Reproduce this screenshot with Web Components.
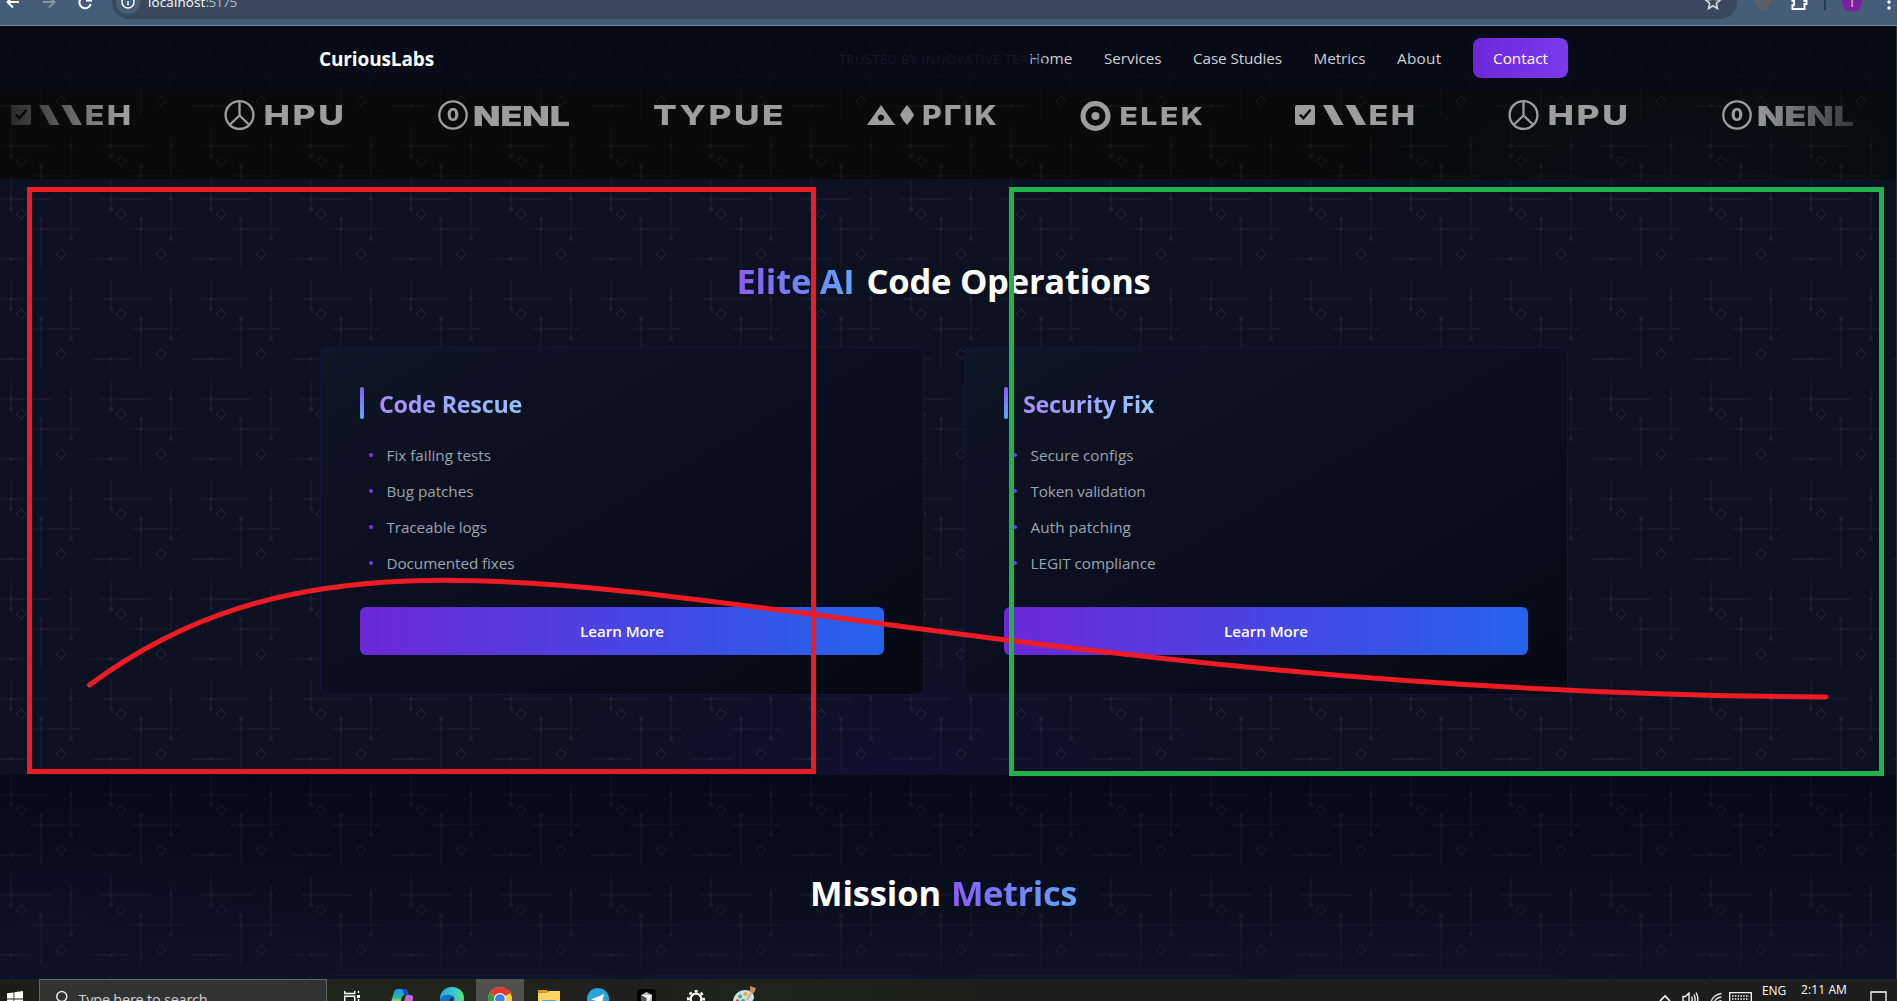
<!DOCTYPE html>
<html lang="en">
<head>
<meta charset="utf-8">
<title>CuriousLabs</title>
<style>
html,body{margin:0;height:100%;background:#0c1122;overflow:hidden}
body{font-family:"Open Sans","Noto Sans",sans-serif;font-size:15.3px;color:#fff}
</style>
</head>
<body>
<desktop-view></desktop-view>
<script>
const tile = (k) => {
  const s = `<svg xmlns="http://www.w3.org/2000/svg" width="100" height="100"><g fill="#fff" fill-opacity="${.028*k}"><path d="M10 0h2v30h-2zM1 19h50v2H1zM70 10h2v50h-2zM40 40h2v50h-2zM31 49h50v2H31zM0 79h31v2H0zM91 79h9v2h-9z"/></g><g fill="#fff" fill-opacity="${.042*k}"><path d="M9 28h4v4H9zM69 58h4v4h-4zM39 38h4v4h-4z"/><circle cx="11" cy="20" r="2"/><circle cx="71" cy="20" r="2"/><circle cx="41" cy="50" r="2"/><circle cx="11" cy="80" r="2"/></g><path d="M21 30l5 5-5 5-5-5zM61 70l5 5-5 5-5-5z" fill="none" stroke="#fff" stroke-opacity="${.085*k}"/></svg>`;
  return `url('data:image/svg+xml,${encodeURIComponent(s)}')`;
};
const define = (name, html) => customElements.define(name, class extends HTMLElement {
  constructor() {
    super();
    this.attachShadow({ mode: 'open' }).innerHTML = html;
  }
});

define('desktop-view', `
<style>
:host{display:flex;flex-direction:column;height:1001px;width:1897px;position:relative;overflow:hidden}
main{flex:1;min-height:0;overflow:hidden;display:flex;flex-direction:column;box-sizing:border-box;border-right:1px solid #2b2e35}
</style>
<browser-bar></browser-bar>
<main>
  <site-header></site-header>
  <logo-strip></logo-strip>
  <services-section></services-section>
  <metrics-section></metrics-section>
</main>
<task-bar></task-bar>
<pen-marks></pen-marks>`);

define('browser-bar', `
<style>
:host{display:flex;align-items:flex-end;height:25px;flex:none;overflow:hidden;background:#455d78;border-bottom:1px solid #74859a}
.row{display:flex;align-items:center;height:46px;width:1897px;flex:none}
svg{display:block;flex:none}
.pill{display:flex;align-items:center;margin-left:13px;width:1625px;height:34px;border-radius:17px;background:#3a485c;box-sizing:border-box;padding:0 15px 0 4px;font-size:13.4px;flex:none}
.info{width:24px;height:24px;border-radius:50%;background:#455d78;display:grid;place-items:center;margin-right:8px}
.dim{color:#b6bec9}
.sp{flex:1}
.sep{width:2px;height:16px;background:#2d3b4f;margin-left:16px}
.av{width:20px;height:20px;border-radius:50%;background:#7b1fa2;display:grid;place-items:center;font-size:12px;margin:0 24px 0 16px;color:#e7d2ee}
</style>
<div class="row">
 <svg width="99" height="20" viewBox="0 0 99 20" fill="none" stroke="#fff" stroke-width="2"><path d="M19 10H8M13 4.500l-5.500 5.500 5.500 5.500"/><path d="M43 10h11M49 4.500l5.500 5.500-5.500 5.500" stroke="#8798ab"/><path d="M90.500 8a5.800 5.800 0 1 0 .3 4M91 3.500V8.500H86"/></svg>
 <div class="pill">
  <div class="info"><svg width="14" height="14" viewBox="0 0 14 14" fill="none" stroke="#fff" stroke-width="1.500"><circle cx="7" cy="7" r="6"/><path d="M7 6.300v4M7 3.500v1.500"/></svg></div>
  <fit-text w="57.5">localhost</fit-text><fit-text class="dim" w="31">:5175</fit-text>
  <div class="sp"></div>
  <svg width="18" height="18" viewBox="0 0 18 18" fill="none" stroke="#d3d9e0" stroke-width="1.600"><path d="M9 1.800l2.100 4.700 5.100.5-3.900 3.400 1.200 5.100L9 12.800l-4.500 2.700 1.200-5.100L1.800 7l5.100-.5z"/></svg>
 </div>
 <svg style="margin-left:17px" width="18" height="20" viewBox="0 0 18 20"><path d="M4 2h10l3 7-4 9H5L1 9z" fill="#615f5f"/><path d="M5 11h3M10 11h3M6 14h6" stroke="#455d78" stroke-width="1.500"/></svg>
 <svg style="margin-left:18px" width="18" height="18" viewBox="0 0 18 18" fill="none" stroke="#fff" stroke-width="2"><path d="M2.500 4h4V2h4v2h4v4h2v3h-2v5h-12v-4h1.500V8H2.500z"/></svg>
 <div class="sep"></div>
 <div class="av">T</div>
 <svg width="6" height="18" viewBox="0 0 6 18" fill="#fff"><circle cx="3" cy="3" r="1.700"/><circle cx="3" cy="9" r="1.700"/><circle cx="3" cy="15" r="1.700"/></svg>
</div>`);

define('site-header', `
<style>
:host{display:flex;height:64px;flex:none;background:${tile(.2)} 0 0,#070a17;align-items:center;padding:0 328px 0 319px;position:relative}
.brand{font-weight:700;font-size:19px;margin-top:2px}
nav{margin-left:auto;display:flex;align-items:center;gap:31.500px;color:#ced1d8}
.cta{background:linear-gradient(90deg,#6d28d9,#7c3aed);border-radius:8px;width:95px;height:40px;display:flex;align-items:center;justify-content:center;color:#fff}
.ghost{position:absolute;left:839px;top:24px;line-height:20px;font-size:12.500px;color:#151924}
</style>
<fit-text class="ghost" w="209">TRUSTED BY INNOVATIVE TEAMS</fit-text>
<fit-text class="brand" w="115">CuriousLabs</fit-text>
<nav>
 <fit-text w="43.5">Home</fit-text><fit-text w="57.5">Services</fit-text><fit-text w="89">Case Studies</fit-text><fit-text w="52">Metrics</fit-text><fit-text w="44.500">About</fit-text>
 <div class="cta"><fit-text w="55">Contact</fit-text></div>
</nav>`);

const LOGOS = {
  weh: `<path fill-rule="evenodd" d="M2 105h16a2 2 0 0 1 2 2v16a2 2 0 0 1-2 2H2a2 2 0 0 1-2-2v-16a2 2 0 0 1 2-2zM4 115.500l4.500 4.500 8-9.500-2-1.600-6.200 7.300-2.500-2.500z"/><path d="M28 105h9.500l11 20H39zM50.500 105H60l11 20h-9.500z"/><text x="73.500" y="125" textLength="49">EH</text>`,
  hpu: `<g fill="none" stroke="#9d9d9d" stroke-width="2.300"><circle cx="14.500" cy="115" r="13.900"/><path d="M14.500 101v14.500M14.500 115.500L4.500 125M14.500 115.500l10 9.500"/></g><text x="38.500" y="125" textLength="83">HPU</text>`,
  nenl: `<circle cx="14" cy="115" r="13.700" fill="none" stroke="#9d9d9d" stroke-width="2.300"/><text x="8" y="121.300" style="font-size:17.500px;letter-spacing:0" textLength="12">0</text><text x="34" y="126" style="font-weight:900;letter-spacing:0" textLength="97">NENL</text>`,
  typue: `<text x="0" y="125" textLength="133">TYPUE</text>`,
  aptik: `<path fill-rule="evenodd" d="M14 105l14 20H0zM14 114.500a3.200 3.200 0 1 0 .01 0zM40 105q4.500 5 7 10-2.500 5-7 10-4.500-5-7-10 2.500-5 7-10z"/><text x="55" y="125" textLength="77">PΓIK</text>`,
  elek: `<circle cx="14.500" cy="116" r="12.500" fill="none" stroke="#9d9d9d" stroke-width="5"/><circle cx="14.500" cy="116" r="4"/><text x="38.500" y="125" style="font-size:24.500px" textLength="86">ELEK</text>`
};
customElements.define('brand-logo', class extends HTMLElement {
  constructor() {
    super();
    this.attachShadow({ mode: 'open' }).innerHTML = `<style>:host{display:block;flex:none;width:214px}svg{display:block;overflow:visible}text{font:800 27.500px Inter,sans-serif;letter-spacing:2px}</style>
<svg width="214" height="40" viewBox="0 95 214 40" fill="#9d9d9d">${LOGOS[this.getAttribute('name')]}</svg>`;
    this.shadowRoot.querySelectorAll('text').forEach(t => t.setAttribute('lengthAdjust', 'spacingAndGlyphs'));
  }
});

define('logo-strip', `
<style>
:host{display:block;height:89px;flex:none;background:${tile(.75)} 0 -64px,radial-gradient(ellipse 330px 120px at 1680px 70px,#0b0e15,transparent),#0a0a0b}
.track{display:flex;padding:5px 0 0 11px;overflow:hidden;-webkit-mask-image:linear-gradient(90deg,transparent -20px,#000 125px,#000 1755px,transparent 1895px);mask-image:linear-gradient(90deg,transparent -20px,#000 125px,#000 1755px,transparent 1895px)}
</style>
<div class="track">${['weh','hpu','nenl','typue','aptik','elek','weh','hpu','nenl'].map(n => `<brand-logo name="${n}"></brand-logo>`).join('')}</div>`);

define('service-card', `
<style>
:host{display:flex;flex-direction:column;box-sizing:border-box;width:604px;height:348px;border:1px solid #17123a;border-radius:8px;padding:39px;background:linear-gradient(150deg,#0d1726 0,#0c1122 24%,#080e1c 62%,#040914 100%)}
.h{display:flex;align-items:center;height:32px;gap:15px;font-size:23.300px;font-weight:700}
.h:before{content:"";width:4px;height:32px;border-radius:2px;background:linear-gradient(#8b5cf6,#60a5fa)}
.h slot{display:block;margin-top:2px}
ul{list-style:none;margin:24px 0 0;padding:0;display:flex;flex-direction:column;gap:12px}
.btn{margin-top:32px;height:48px;border-radius:6px;background:linear-gradient(90deg,#6d28d9,#2563eb);display:flex;align-items:center;justify-content:center;font-weight:600;font-size:15.200px}
</style>
<div class="h"><slot name="title"></slot></div>
<ul><slot></slot></ul>
<div class="btn"><fit-text w="84">Learn More</fit-text></div>`);

define('card-item', `
<style>
:host{display:flex;align-items:center;height:24px;color:#9ca3af;padding-left:9px;gap:13.500px}
i{width:4px;height:4px;border-radius:50%;background:#7c3aed}
</style><i></i><slot></slot>`);

define('services-section', `
<style>
:host{display:flex;flex-direction:column;align-items:center;box-sizing:border-box;height:596px;flex:none;padding:82px 8px 0 0;background:${tile(1)},radial-gradient(ellipse 330px 150px at 890px 596px,#110f2e,transparent),#0c1122}
.title{display:flex;height:40px;line-height:40px;font-size:34.500px;font-weight:700;gap:12px;margin-left:-1px}
.g{background:linear-gradient(90deg,#8b5cf6,#60a5fa);-webkit-background-clip:text;background-clip:text;color:transparent}
.cards{display:flex;gap:40px;margin-top:46px}
.t{background:linear-gradient(90deg,#a78bfa,#93c5fd);-webkit-background-clip:text;background-clip:text;color:transparent}
</style>
<div class="title"><fit-text class="g" w="118">Elite AI</fit-text><fit-text w="284">Code Operations</fit-text></div>
<div class="cards">
 <service-card><fit-text slot="title" class="t" w="143">Code Rescue</fit-text>
  <card-item><fit-text w="104.500">Fix failing tests</fit-text></card-item>
  <card-item><fit-text w="87">Bug patches</fit-text></card-item>
  <card-item><fit-text w="100.500">Traceable logs</fit-text></card-item>
  <card-item><fit-text w="128">Documented fixes</fit-text></card-item></service-card>
 <service-card><fit-text slot="title" class="t" w="131">Security Fix</fit-text>
  <card-item><fit-text w="103">Secure configs</fit-text></card-item>
  <card-item><fit-text w="115">Token validation</fit-text></card-item>
  <card-item><fit-text w="100.500">Auth patching</fit-text></card-item>
  <card-item><fit-text w="125">LEGIT compliance</fit-text></card-item></service-card>
</div>`);

define('metrics-section', `
<style>
:host{display:flex;flex-direction:column;align-items:center;box-sizing:border-box;height:204px;flex:none;overflow:hidden;padding:98px 8px 0 0;background:${tile(.85)},radial-gradient(ellipse 300px 130px at 60px 150px,rgba(22,14,42,.25),transparent),linear-gradient(#040a16,#0c1124)}
.title{display:flex;flex:none;height:40px;line-height:40px;font-size:34.500px;font-weight:700;gap:10px;margin-left:-1px}
.g{background:linear-gradient(90deg,#8b5cf6,#60a5fa);-webkit-background-clip:text;background-clip:text;color:transparent}
.row{display:flex;gap:32px;margin-top:62px}
.row i{box-sizing:border-box;width:288px;height:100px;border:1px solid #17123a;border-radius:12px;background:#0d1428}
</style>
<div class="title"><fit-text w="131">Mission</fit-text><fit-text class="g" w="126">Metrics</fit-text></div>
<div class="row"><i></i><i></i><i></i><i></i></div>`);

define('task-bar', `
<style>
:host{display:block;height:22px;flex:none;overflow:hidden;background:linear-gradient(90deg,#1c1c1b 0,#22251b 340px,#22241b 480px,#1f1f1e 620px,#20231b 770px,#1d1d1d 1000px)}
.row{display:flex;align-items:center;height:40px}
svg{display:block;flex:none}
.win{width:39px;display:flex;justify-content:center;padding-right:9px;box-sizing:border-box;flex:none}
.search{width:288px;height:40px;box-sizing:border-box;border:1px solid #646464;background:#323232;display:flex;align-items:center;color:#d2d2d2;font-size:14.500px;padding-left:15px;gap:10.500px;flex:none}
.s{width:49px;height:40px;display:flex;align-items:center;justify-content:center;flex:none}
.on{background:#50504e}
.tray{margin-left:auto;display:flex;align-items:center;font-size:12px}
</style>
<div class="row">
 <div class="win"><svg width="16" height="16" viewBox="0 0 16 16" fill="#fff"><path d="M0 2.300L6.500 1.400v6.200H0zM7.300 1.200L16 0v7.600H7.300zM0 8.400h6.500v6.200L0 13.700zM7.300 8.400H16V16l-8.700-1.200z"/></svg></div>
 <div class="search"><svg width="13" height="18" viewBox="0 0 13 18" fill="none" stroke="#e8e8e8" stroke-width="1.500"><circle cx="6.800" cy="6.500" r="5"/><path d="M4 11l-3.500 5"/></svg><fit-text w="129">Type here to search</fit-text></div>
 <div class="s"><svg width="18" height="18" viewBox="0 0 18 18" fill="none" stroke="#fff" stroke-width="1.400"><path d="M1.700 1v2.500h10V1M1.700 17V6.300h10V17M15.500 1v2M15.500 9v8"/><path d="M14 5h3v3h-3z" fill="#fff" stroke="none"/></svg></div>
 <div class="s" style="width:52px"><svg width="24" height="22" viewBox="0 0 24 22"><defs><linearGradient id="a" x2="0" y2="1"><stop stop-color="#1494f2"/><stop offset=".5" stop-color="#27b9a0"/><stop offset=".8" stop-color="#e9dc32"/></linearGradient><linearGradient id="b" x2="0" y2="1"><stop stop-color="#b46bf0"/><stop offset=".7" stop-color="#f0569c"/></linearGradient></defs><path d="M7 1h8q2 0 2.500 2l1 4h-4q-2 0-3 3l-2 8H4q-4 0-3-4L4 4q1-3 3-3z" fill="url(#a)"/><path d="M11 1h4q2 0 2.500 2l1.300 4H14L13 3q-.5-2-2-2z" fill="#1b48b8"/><path d="M17 7h3q4 0 3 4l-2 8q-1 3-4 3h-5l3-12q.5-3 2-3z" fill="url(#b)"/></svg></div>
 <div class="s" style="width:48px"><svg width="24" height="24" viewBox="0 0 24 24"><defs><linearGradient id="e"><stop stop-color="#2aa7dd"/><stop offset=".6" stop-color="#38cbd0"/><stop offset="1" stop-color="#62e25c"/></linearGradient></defs><circle cx="12" cy="12" r="12" fill="#1273c4"/><path d="M0 12C0 5 5 0 12 0s12 5 12 11c0 4-3 6-7 6-3 0-4-1-3-3 2-5-3-7-7-6-4 0-6 2-7 4z" fill="url(#e)"/><path d="M9 13q1-3 4-3 1.500 1.500.5 4-.5 2 1 3-5 1-5.500-4z" fill="#17395e"/></svg></div>
 <div class="s on" style="width:48px"><svg width="24" height="24" viewBox="0 0 24 24"><circle cx="12" cy="12" r="12" fill="#ffcd40"/><path d="M12 12L1.600 6A12 12 0 0 1 22.400 6z" fill="#e33b2e"/><path d="M1.600 6A12 12 0 0 0 12 24l5-9z" fill="#2c9f4b"/><path d="M1.600 6h20.800H12z" fill="#e33b2e"/><circle cx="12" cy="12" r="6" fill="#fff"/><circle cx="12" cy="12" r="4.800" fill="#3f7ff0"/></svg></div>
 <div class="s"><svg width="22" height="18" viewBox="0 0 22 18"><path d="M0 0h9l1.500 2.500H0z" fill="#e0a010"/><path d="M0 2.500h9L11 1h11v17H0z" fill="#fbd362"/><path d="M4 11.500q0-1.500 1.500-1.500h11q1.500 0 1.500 1.500V18H4z" fill="#4aa8e0"/></svg></div>
 <div class="s"><svg width="22" height="22" viewBox="0 0 22 22"><circle cx="11" cy="11" r="11" fill="#2ba3dc"/><path d="M4 11.500L17 6l-2.500 11-4-3-2 2-.5-3.500z" fill="#fff"/></svg></div>
 <div class="s"><svg width="19" height="20" viewBox="0 0 19 20"><rect width="19" height="20" rx="4" fill="#000"/><path d="M4 6l5.500-3L15 6v7l-5.500 4L4 13z" fill="#bdbdbd"/><path d="M4 6h11l-5.500 11V9z" fill="#f4f4f4"/><path d="M4 6l5.500 3v8L4 13z" fill="#555"/></svg></div>
 <div class="s"><svg width="18" height="18" viewBox="0 0 18 18" fill="none" stroke="#fff"><circle cx="9" cy="9" r="5.300" stroke-width="2.200"/><circle cx="9" cy="9" r="7.700" stroke-width="2.600" stroke-dasharray="3 3.047" stroke-dashoffset="1.500"/></svg></div>
 <div class="s" style="width:50px"><svg width="26" height="26" viewBox="0 0 26 26"><path d="M1 16C1 9 7 4 13 4c5 0 9 3 9 7s-3 4-3 7-3 6-8 6S1 21 1 16z" fill="#c7e2ee"/><circle cx="8" cy="10.500" r="2" fill="#3fb35b"/><circle cx="13.500" cy="8" r="2" fill="#f3a33a"/><circle cx="5.500" cy="15" r="1.800" fill="#d8453b"/><circle cx="11" cy="15" r="2" fill="#3d8fe0"/><path d="M15 14L21 4" stroke="#d9aa6a" stroke-width="2"/><path d="M18 0l6 2-2 5-4-2z" fill="#c08b5e"/></svg></div>
 <div class="tray">
  <svg width="12" height="10" viewBox="0 0 12 10" fill="none" stroke="#fff" stroke-width="1.600"><path d="M1 7l5-5 5 5"/></svg>
  <svg style="margin-left:11px" width="17" height="16" viewBox="0 0 17 16" fill="none" stroke="#fff" stroke-width="1.300"><path d="M1 5.500h2.500L7 2v12l-3.500-3.500H1zM9.500 5.500q1.500 2.500 0 5M11.800 3.500q2.700 4.500 0 9M14 1.500q3.700 6.500 0 13"/></svg>
  <svg style="margin-left:11px" width="12" height="14" viewBox="0 0 12 14" fill="none" stroke="#ddd" stroke-width="1.300"><path d="M1 10Q3 3 11.500 1.500M4 11q1-5 7.500-6M7 12q.500-3 4.500-3.500"/></svg>
  <svg style="margin-left:7px" width="23" height="15" viewBox="0 0 23 15" fill="none" stroke="#fff" stroke-width="1.300"><path d="M.7.700h21.600v13.500H.7z"/><path d="M3 4h17M3 7h17" stroke-dasharray="1.500 1.300"/><path d="M6 11h11"/></svg>
  <fit-text style="margin:-18px 15px 0 10px" w="24">ENG</fit-text>
  <fit-text style="margin:-20px 23px 0 0" w="46">2:11 AM</fit-text>
  <svg style="margin-right:10px" width="17" height="17" viewBox="0 0 17 17" fill="none" stroke="#fff" stroke-width="1.300"><path d="M1 1h15v12h-4v3l-3-3H1z"/></svg>
 </div>
</div>`);

define('pen-marks', `
<style>:host{position:absolute;inset:0;pointer-events:none}svg{display:block}</style>
<svg width="1897" height="1001" fill="none" stroke-width="5"><rect x="29.500" y="189.500" width="784" height="582" stroke="#ed1c24"/><path d="M89.500 685C412 446 792 690 1826 697" stroke="#ed1c24" stroke-linecap="round"/><rect x="1011.500" y="189.500" width="870" height="584" stroke="#22b14c"/></svg>`);

customElements.define('fit-text', class extends HTMLElement {
  constructor() {
    super();
    this.attachShadow({ mode: 'open' }).innerHTML = '<style>:host{display:inline-block;white-space:pre;flex:none}</style><slot></slot>';
  }
  connectedCallback() {
    const natural = this.getBoundingClientRect().width;
    const target = parseFloat(this.getAttribute('w'));
    this.style.letterSpacing = (target - natural) / this.textContent.length + 'px';
  }
});
</script>
</body>
</html>
